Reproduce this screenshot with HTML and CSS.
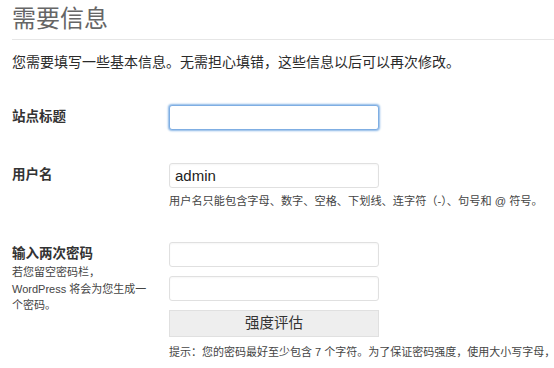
FILE: index.html
```html
<!DOCTYPE html>
<html lang="zh-CN">
<head>
    <meta charset="UTF-8">
    <meta name="viewport" content="width=device-width, initial-scale=1.0">
    <title>需要信息</title>
    <link rel="stylesheet" href="styles.css">
</head>
<body>
    <div class="page">
        <h1 class="title">需要信息</h1>
        <p class="intro">您需要填写一些基本信息。无需担心填错，这些信息以后可以再次修改。</p>

        <div class="form">
            <div class="row">
                <label class="label" for="weblog_title">站点标题</label>
                <div class="field">
                    <input type="text" id="weblog_title" class="text is-focused">
                </div>
            </div>

            <div class="row">
                <label class="label" for="user_login">用户名</label>
                <div class="field">
                    <input type="text" id="user_login" class="text" value="admin">
                    <p class="desc">用户名只能包含字母、数字、空格、下划线、连字符（-）、句号和 @ 符号。</p>
                </div>
            </div>

            <div class="row">
                <div class="label">
                    <label for="pass1">输入两次密码</label>
                    <p class="sub">若您留空密码栏，WordPress 将会为您生成一个密码。</p>
                </div>
                <div class="field">
                    <input type="password" id="pass1" class="text">
                    <input type="password" id="pass2" class="text">
                    <div class="strength">强度评估</div>
                    <p class="desc hint">提示：您的密码最好至少包含 7 个字符。为了保证密码强度，使用大小写字母，数字和符号（例如 ! " ? $ % ^ &amp; ）。</p>
                </div>
            </div>
        </div>
    </div>
</body>
</html>
```

FILE: styles.css
```css
html, body {
    overflow: hidden;
}

body {
    margin: 0;
    background-color: #fff;
    color: #333;
    font-family: "Liberation Sans", "Noto Sans CJK SC", sans-serif;
}

.page {
    padding-left: 12px;
}

.title {
    margin: 0;
    padding-top: 4px;
    padding-bottom: 5px;
    font-size: 24px;
    line-height: 30px;
    font-weight: normal;
    color: #666;
    border-bottom: 1px solid #e6e6e6;
}

.intro {
    margin: 12px 0 0;
    font-size: 14px;
    line-height: 20px;
    color: #2a2a2a;
}

.form {
    margin-top: 33px;
}

.row {
    display: grid;
    grid-template-columns: 157px 1fr;
    margin-bottom: 33px;
}

.label {
    padding-top: 2px;
    font-size: 13.5px;
    line-height: 20px;
    font-weight: bold;
    color: #333;
}

.sub {
    margin: 0;
    width: 140px;
    font-size: 11px;
    line-height: 16.5px;
    font-weight: normal;
    color: #444;
}

.field {
    display: flex;
    flex-direction: column;
    gap: 9px;
}

.text {
    box-sizing: border-box;
    width: 210px;
    height: 25px;
    margin: 0;
    padding: 2px 5px;
    border: 1px solid #e0e0e0;
    border-radius: 3px;
    font-family: "Liberation Sans", sans-serif;
    font-size: 15px;
    color: #222;
    background-color: #fff;
    box-shadow: inset 0 1px 2px rgba(0, 0, 0, 0.04);
    outline: none;
}

.text.is-focused {
    border-color: #7faee3;
    box-shadow: 0 0 2px 1px #8ab6e6;
}

.desc {
    margin: -4px 0 0;
    font-size: 11.2px;
    line-height: 16px;
    color: #444;
    white-space: nowrap;
}

.strength {
    box-sizing: border-box;
    width: 210px;
    height: 27px;
    border: 1px solid #e0e0e0;
    background-color: #eee;
    font-size: 14.5px;
    line-height: 25px;
    text-align: center;
    color: #333;
}

.hint {
    margin-top: -2px;
    font-size: 11px;
}
```
